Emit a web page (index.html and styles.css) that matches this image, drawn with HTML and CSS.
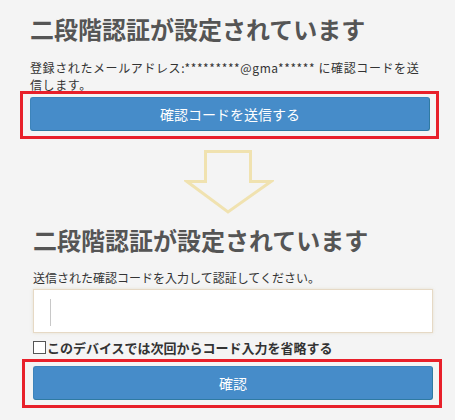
FILE: index.html
```html
<!DOCTYPE html>
<html lang="ja">
<head>
<meta charset="utf-8">
<link rel="stylesheet" href="styles.css">
</head>
<body>
<div class="page">
  <section class="step step-one">
    <h1 class="title">二段階認証が設定されています</h1>
    <p class="desc">登録されたメールアドレス:*********@gma****** に確認コードを送信します。</p>
    <div class="highlight hl-one">
      <button class="btn">確認コードを送信する</button>
    </div>
  </section>
  <div class="arrow">
    <svg width="90" height="64" viewBox="0 0 90 64">
      <polygon points="21.5,1.5 66.5,1.5 66.5,31.5 87,31.5 44,62 3,31.5 21.5,31.5" fill="none" stroke="#f0e2b0" stroke-width="3" stroke-linejoin="miter"/>
    </svg>
  </div>
  <section class="step step-two">
    <h1 class="title">二段階認証が設定されています</h1>
    <p class="desc">送信された確認コードを入力して認証してください。</p>
    <div class="field"><span class="caret"></span></div>
    <label class="remember"><span class="box"></span>このデバイスでは次回からコード入力を省略する</label>
    <div class="highlight hl-two">
      <button class="btn">確認</button>
    </div>
  </section>
</div>
</body>
</html>
```

FILE: styles.css
```css
html, body {
  margin: 0;
  padding: 0;
  background: #f4f4f4;
}
body {
  font-family: "Noto Sans CJK JP", "Noto Sans", sans-serif;
  color: #333;
  width: 455px;
  height: 420px;
  overflow: hidden;
}
.page {
  padding-top: 14px;
}
.step-one {
  padding-left: 30px;
  width: 400px;
}
.step-two {
  padding-left: 33px;
  width: 400px;
  margin-top: 11px;
}
.title {
  margin: 0;
  font-size: 24px;
  line-height: 30px;
  font-weight: bold;
  color: #555;
}
.desc {
  margin: 0;
  font-size: 12px;
  line-height: 17px;
  color: #333;
}
.step-one .desc {
  margin-top: 15px;
  width: 398px;
  letter-spacing: 0.6px;
}
.step-two .desc {
  margin-top: 14px;
}
.highlight {
  border: 3px solid #e8202a;
  box-sizing: border-box;
}
.hl-one {
  margin-top: -2px;
  margin-left: -10px;
  width: 419px;
  height: 48px;
  padding: 3px 6px 5px 7px;
}
.hl-two {
  margin-top: 3px;
  margin-left: -11px;
  width: 420px;
  height: 49px;
  padding: 4px 6px 5px 8px;
}
.btn {
  display: block;
  width: 400px;
  height: 34px;
  margin: 0;
  padding: 0;
  border: 1px solid #3d84bb;
  border-right-color: #2f7aa2;
  border-bottom-color: #2f7aa2;
  border-radius: 3px;
  background: #468cc9;
  color: #fff;
  font-family: "Noto Sans CJK JP", "Noto Sans", sans-serif;
  font-size: 14px;
  line-height: 32px;
  text-align: center;
}
.arrow {
  display: flex;
  justify-content: center;
  padding-left: 2px;
  margin-top: 11px;
  height: 64px;
}
.arrow svg {
  display: block;
}
.field {
  margin-top: 3px;
  width: 400px;
  height: 44px;
  box-sizing: border-box;
  background: #fff;
  border: 1px solid #e6d9c5;
  box-shadow: 0 0 3px rgba(210, 190, 150, 0.35);
  padding: 9px 0 0 16px;
}
.caret {
  display: block;
  width: 1px;
  height: 27px;
  background: #c8c8c8;
}
.remember {
  display: flex;
  align-items: center;
  margin-top: 6px;
  font-size: 13px;
  line-height: 17px;
  font-weight: bold;
  color: #333;
}
.box {
  display: inline-block;
  width: 11px;
  height: 11px;
  border: 1px solid #555;
  background: #fff;
  margin-right: 1px;
  flex: none;
}
```
